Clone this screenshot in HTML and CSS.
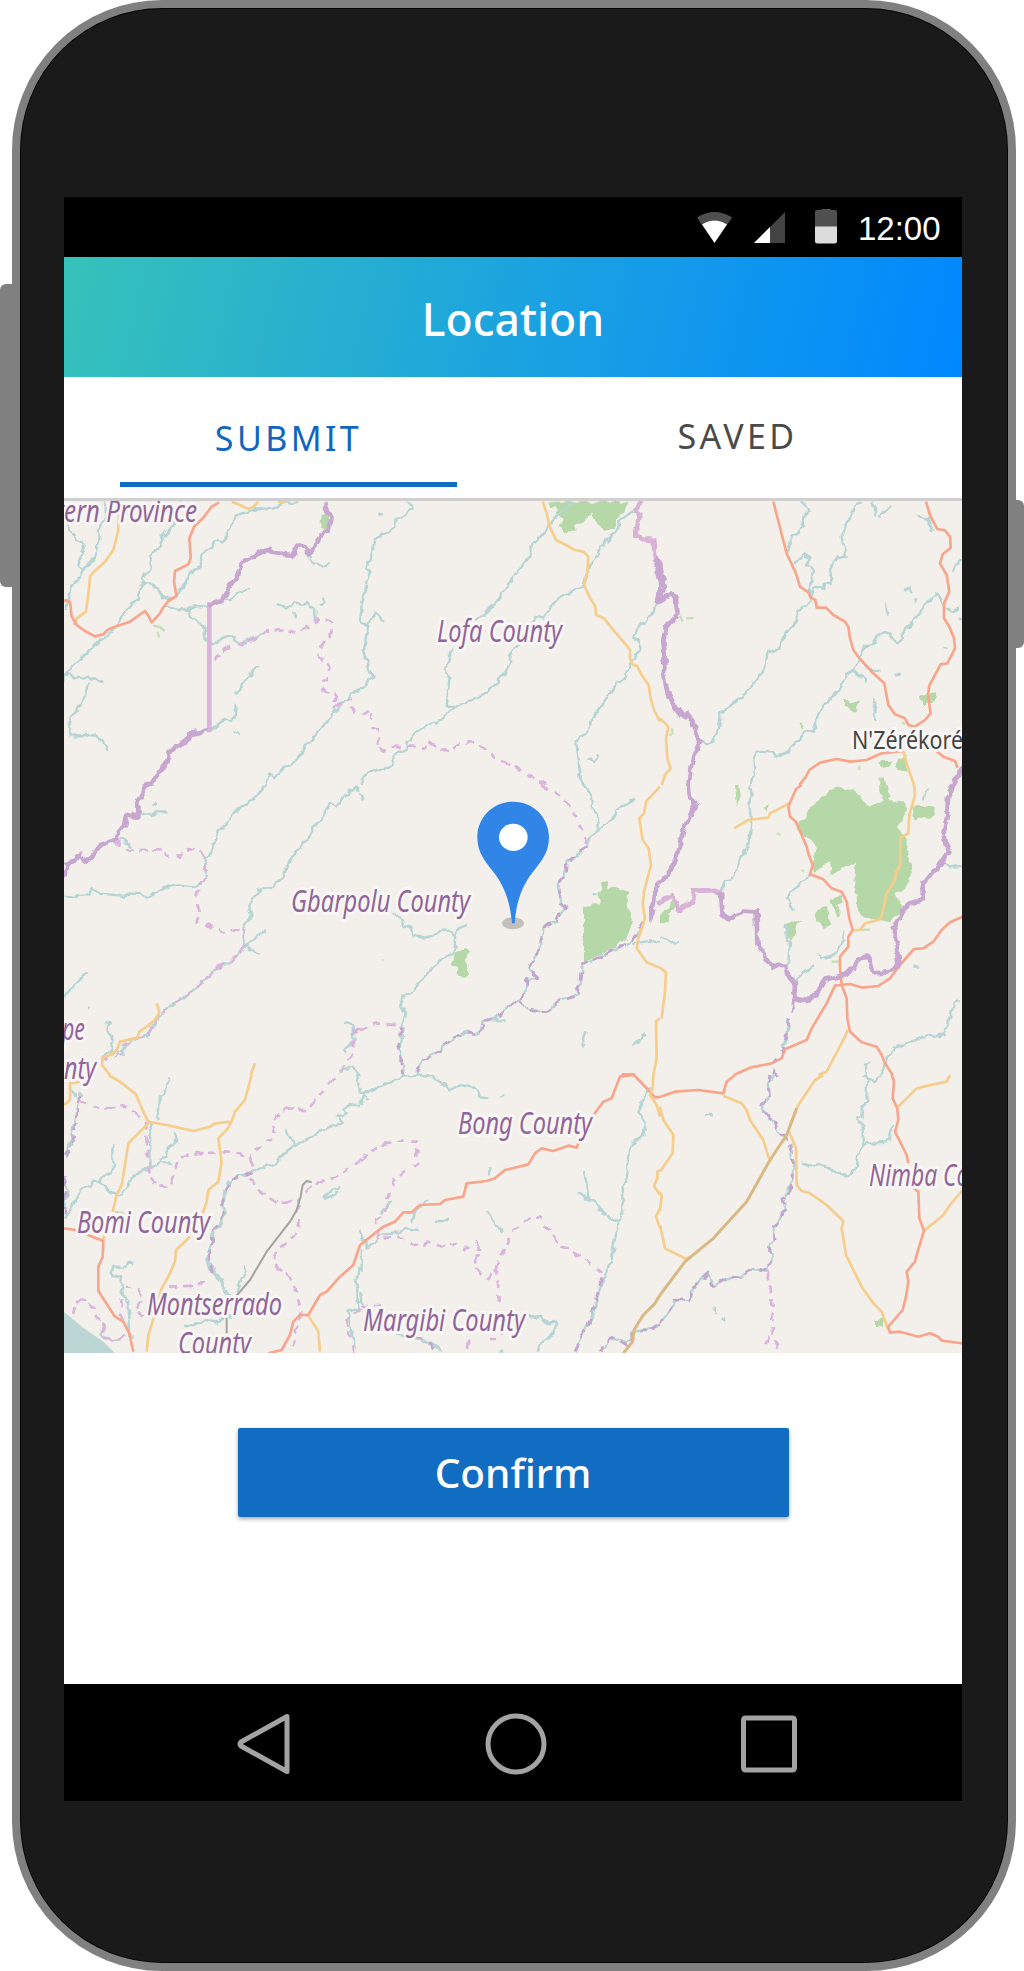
FILE: index.html
```html
<!DOCTYPE html>
<html lang="en">
<head>
<meta charset="utf-8">
<title>Location</title>
<link rel="stylesheet" href="styles.css">
</head>
<body>
<div class="device">
  <span class="side-key side-key-left"></span>
  <span class="side-key side-key-right"></span>
  <div class="shell">
    <div class="screen">
      <div class="status-bar">
        <svg class="wifi" width="36" height="32" viewBox="0 0 36 32"><path fill="#4f4f4f" d="M0 5.5Q18-5.5 35 5.5L30 13Q17.5 4 5 13Z"/><path fill="#fff" d="M5 12.500Q17.500 4.500 30 12.500L17.500 31Z"/></svg>
        <svg class="signal" width="31" height="31" viewBox="0 0 31 31"><path fill="#444" d="M31 0V31H0Z"/><path fill="#fff" d="M16 15V31H0Z"/></svg>
        <svg class="battery" width="22" height="35" viewBox="0 0 22 35"><path fill="#4f4f4f" d="M6 0H16V1H20Q22 1 22 3V18H0V3Q0 1 2 1H6Z"/><path fill="#dcdcdc" d="M0 17.500H22V32Q22 34.500 19.500 34.500H2.500Q0 34.500 0 32Z"/></svg>
        <span class="clock">12:00</span>
      </div>
      <header class="title-bar"><h1>Location</h1></header>
      <nav class="tabs">
        <a class="tab tab-active">SUBMIT</a>
        <a class="tab tab-saved">SAVED</a>
      </nav>
      <svg class="map" viewBox="64 501 898 852">
        <defs>
          <filter id="meander" x="-5%" y="-5%" width="110%" height="110%" color-interpolation-filters="sRGB">
            <feTurbulence type="fractalNoise" baseFrequency=".035" numOctaves="2" seed="4"/>
            <feDisplacementMap in="SourceGraphic" scale="22" xChannelSelector="R" yChannelSelector="G"/>
          </filter>
        </defs>
        <rect class="land" x="64" y="501" width="898" height="852"/>

        <!-- north west -->
        <g transform="translate(60 495) scale(.33333)">
          <path class="wood" d="M785 60L805 55L803 105L780 98Z"/>
          <path class="wood-line" d="M280 392L300 396L314 408M292 410L298 428"/>
          <path class="river" d="M12 80L35 105L48 135L68 142L72 165L55 185L58 205L72 220L62 250L35 268L32 295L18 345M136 20L132 80L116 110L114 155L100 190L72 220M365 20L340 90L308 125L300 150L272 180V225L252 245L248 268L238 290L236 313L215 325L190 360L170 385L155 415L120 435L95 460L70 485L25 525L12 560M25 525L40 552L55 545L65 552L85 545L100 555L130 561M86 560L75 600L48 655L35 670L25 695L32 722L80 720L105 722L125 740L142 768M248 268L280 268L292 285L305 310L345 308M345 308L375 270L390 232L422 218L424 180L450 160L462 140L485 143L512 95L538 58L580 45L640 38L670 25L710 20M318 328L350 342L385 345L410 335L450 331M385 345L400 372L430 395L433 430L455 445L478 438L492 425L522 420L528 445L550 445L580 425L612 415M490 315L512 315L540 293L566 280M598 515L578 520L572 545L545 570L528 595M527 628L525 660L515 675H492L450 705M520 705L530 708L538 715M755 180L756 205L775 207L785 212L803 207M650 330L672 338L698 335L705 322L725 326L738 320L745 335L765 338L767 370L770 385M790 305L790 325L778 332M900 585L880 592L850 620L800 680L740 750L688 815L665 825L648 853L628 838L612 870M700 355L702 373"/>
          <path class="orange" d="M180 20L174 110L160 165L135 200L100 232L90 245L86 290L78 350L50 370L42 390M515 20L540 30L565 42L580 35L595 20M655 20L675 22"/>
          <path class="red" d="M12 315L30 320L35 365L50 390L75 408L105 424L130 418L142 405L160 397L210 380L255 348L265 362L275 382L300 355L308 340L325 318L350 303L342 262L345 228L385 208L392 188L388 130L402 95L430 68L455 35L478 22"/>
          <path class="border straight" d="M448 322V712"/>
          <path class="border" d="M795 20L803 50L812 75L805 105L790 112L770 145L747 176L730 158L712 152L698 180L650 175L622 165L598 172L570 185L548 203L530 245L505 280L485 318L448 330M448 705L388 718L375 742L345 755L330 770L318 802L302 832L285 845L275 870"/>
          <path class="county" d="M460 497L500 460L545 445L600 420L640 402L682 406L712 413L740 400L768 385L775 370L800 375L815 385L808 425L785 460L778 485L798 498L808 515L804 545L785 560V582L806 593L828 600L820 635L845 625L865 612L885 612M870 635L880 645L887 660"/>
        </g>

        <!-- north -->
        <g transform="translate(360 495) scale(.33333)">
          <path class="wood" d="M565 20H805L795 50L775 62L762 98L732 104L710 85L693 55L675 80L645 90L650 110L608 108L600 92L606 70L585 55L595 42L570 38Z"/>
          <path class="river" d="M145 20L160 38L135 58L103 72V98L85 112L42 130L40 165L22 215L30 225L18 262L16 295L6 325L0 380M0 382L25 390L45 355L58 365L75 383M25 390L18 425L12 470L22 510L40 547L0 585M900 322L888 328L880 350L858 380L842 388L820 422L842 460L818 500L808 520L790 550L768 565L755 590L740 605L728 630L695 675L685 705L645 742L655 800L666 870M640 20L605 50L580 72L555 110L518 150L508 183L470 235L435 285L408 330L380 348L345 378M820 48L782 75L760 120L735 145L710 180L690 202L670 272L630 290L592 310L575 335L550 368L530 362L520 378L465 460L455 475L440 520L410 565L385 590L350 607L315 622L278 642L232 683L182 697L158 718L155 735L140 740V765L115 768L95 798V810L70 823L28 830L5 850V870M278 460L258 515L268 550L260 630L278 635V645M55 55L65 58M685 790L700 800L712 778"/>
          <path class="orange" d="M548 20L560 55L568 92L588 135L618 150L645 165L670 170L685 185L682 230L672 270L688 305L706 335L708 360L732 370L760 405L790 440L810 465V490L818 508L832 514L845 540L866 570L872 610L882 645L900 680"/>
          <path class="border-light" d="M850 15L828 45L838 55L834 90L824 122L848 132L882 135L886 200"/>
          <path class="border" d="M886 190L898 215L890 235L900 260L902 295L885 330"/>
          <path class="county" d="M5 660L28 645L38 650V698L60 708L50 755L70 764L110 755L140 758H195L202 738L225 753L240 768L275 762L305 742L345 742L370 755L400 785L430 800L470 815L510 845L560 870"/>
        </g>

        <!-- north east -->
        <g transform="translate(660 495) scale(.33333)">
          <path class="wood" d="M552 615L572 625L595 612L588 635L590 650L575 655L568 640L552 636ZM778 608L800 598L830 595L822 620L800 623L790 637ZM655 802L690 800L688 820L670 825ZM710 790L735 782L742 830L712 825ZM658 850L670 842L680 870H658ZM415 682L430 688L425 705Z"/>
          <path class="wood-line" d="M60 362L68 380M78 370L100 369M35 700L38 715L28 722M598 812V825M725 682L735 688"/>
          <path class="river" d="M425 20L448 45L430 65L428 88L415 98L412 118L398 125L385 155L380 180M398 208L415 200L433 178L448 188L445 210L462 225L458 255L450 272L452 318L440 330L415 345L405 385L380 410L365 440L350 468L322 475L318 510L295 550L262 590L215 632L180 655L170 715L155 745L140 752L122 740M605 20L588 28L575 60L560 85L545 125L548 145L560 162L555 185L530 190L510 220L515 268L498 265L490 282L465 278L452 300M630 20L645 35V62M658 65L672 48L695 30M770 62L800 75L822 105M900 195L885 215L875 230M900 340L875 350L862 345L845 310L825 295L808 315L795 325L785 345L755 385L738 402L730 430L712 445L698 440L690 412L672 408L650 425L635 450L612 455L600 490L568 535L530 590L490 635L472 660L458 708L430 715L410 740L380 770L355 785L340 772L290 770L280 790L282 820L272 870M572 525L620 555M620 515L662 530M648 610L640 645L650 682M675 325L678 350L685 362M735 285L752 278L752 292M765 320L770 310M705 540H720M850 460H860M890 375H903"/>
          <path class="orange" d="M0 670L25 695L18 730L22 790L32 820L15 840L5 870M730 768L738 800L762 870"/>
          <path class="red" d="M340 20L358 90L380 175L408 235L420 275L445 292L452 308L466 315L470 338H498L520 360L555 380L565 395L570 430L580 465L600 492L640 535L673 565L685 630L705 658L735 670L745 690L765 695L795 675L812 655L804 600L808 572L842 508L862 505L885 460L882 430L868 395L852 370V325L868 290L860 240L840 205L848 178L872 158L870 125L855 106L832 102L810 60L798 20M730 768L665 775L620 795L570 800L530 792L480 803L448 825L438 845L418 870M825 765L850 785L885 798L893 818"/>
          <path class="border" d="M0 195L5 245L12 275L0 320L38 295L48 310L52 355L38 380L18 395L10 435L14 480L12 535L22 590L48 640L68 665L82 655L98 678L106 715L118 745L104 780L92 812L85 875M910 820L875 875"/>
        </g>

        <!-- west -->
        <g transform="translate(60 785) scale(.33333)">
          <path class="river" d="M235 82L255 90L290 82H328M282 55L290 62M175 165L205 172L213 188M615 0L585 40L565 50L518 90L508 108L475 138L460 180L450 212L437 220V285L415 300L395 307L360 298L330 302L290 322L262 335L240 328L210 325L190 332L120 326L100 315L75 328L15 335M12 635L45 598L80 560M900 20L885 8L870 18L825 68L808 55L782 105L758 128L740 165L715 190L695 212L680 245L670 275L645 300L602 318L590 308M602 318L578 342L568 372L575 390L552 435V480L600 507M555 485L580 468L595 448L618 442M555 485L510 530L470 550L430 590L370 640L320 670L285 715L258 752L215 768L180 810M148 705L140 725L145 745L160 772L150 795L135 825M900 870L880 845L835 858M852 712L880 722L884 765L868 790L850 800M80 666H87"/>
          <path class="county" d="M165 165L180 182L208 197L310 192L318 212L362 215L385 190L405 192L437 215V280L420 310L408 340L415 370L413 415L455 425L490 445L550 430L555 470"/>
          <path class="county" d="M555 482L510 528L470 548L430 590L370 640L320 668L290 705L262 752L220 765L180 790L165 815L130 820M900 730L882 745V790L838 865"/>
          <path class="orange" d="M290 655L298 682L285 705L260 725L238 740L232 758L180 770L170 795L155 810L128 815L126 840L150 870M585 835L572 870"/>
          <path class="border" d="M280 -5L250 5L248 25L232 50V95L203 88L195 122L180 142L162 162L110 190L98 208L78 228L64 206L40 228L22 240L8 275"/>
        </g>

        <!-- centre -->
        <g transform="translate(360 785) scale(.33333)">
          <path class="wood" d="M672 368L720 355L716 325L728 287H742L746 312L765 305L805 322L800 360L815 415L800 458L760 492L672 532ZM285 505L315 488L335 500L318 520V558L328 572L315 584L290 568L294 545L274 542Z"/>
          <path class="river" d="M0 25L10 50M98 382L120 395L130 418L155 430L160 448L195 458L225 448L250 430L275 445L285 455L284 500L245 525L215 550L185 585L160 615L122 640L125 665L140 690L128 725L122 790L128 870M285 455L295 430L322 420M665 0L692 22L695 65L712 90L718 135L690 155L678 182L650 212L622 228L620 262L592 295L605 355L618 368L580 410L550 435L538 490L510 535L512 560L530 575L502 588L495 625L475 645L440 670L408 700L368 708L365 735L345 750L318 740L275 760L245 785V795L185 825L172 870M718 135L752 105L780 65L800 60L828 38M475 645L505 672L560 680L590 650L655 630L665 540L740 508L820 465L835 430M820 478L900 465M380 706H430L442 715M680 742L672 765L675 790M855 745L835 760L822 783M700 330H715M68 520H72"/>
          <path class="county" d="M0 735L50 715L120 722M545 0L575 15L620 50L650 95L670 145L678 175"/>
          <path class="county wet" d="M678 182L650 210L622 228L620 262L594 295L605 355L616 370L580 410L550 435L538 490L510 535L512 560L530 575L502 588L495 625L475 645L440 670L408 700L368 708L365 735L345 750L318 740L275 760L245 785L242 800L185 825L172 860M475 645L505 672L560 680L590 650L655 630L665 540L740 508L820 465L850 410M124 730L118 795L128 870"/>
          <path class="orange" d="M900 5L858 50L852 85L838 100L848 165L866 190L873 240L852 320L848 360L855 400L835 460L830 490L848 515L860 532L900 548M900 700L888 708L890 820L880 870"/>
          <path class="border" d="M900 288L882 330L870 412"/>
          <path class="red" d="M785 868H825"/>
        </g>

        <!-- east -->
        <g transform="translate(660 785) scale(.33333)">
          <path class="wood" d="M505 10L535 5L575 12L605 38L625 65L672 45L658 20V0H682L690 30L680 40L700 55L733 48L735 95L715 120L730 160L748 182L742 220L755 240L748 290L710 325L715 345L735 365L720 385L690 408L640 400L612 402L592 378L590 330L582 320L585 240L550 245L515 270L510 230L490 240L465 265L460 255V215L470 190L462 172L425 155L412 105L435 100L448 68L475 50ZM755 68L770 60L820 72L822 95L780 95L760 105ZM465 388L490 362L505 360L508 415L495 430L470 410ZM370 425L395 410L425 408L410 430L412 445L390 465ZM510 345L545 330L550 350L535 355L540 390L528 400L525 365ZM225 0H235L240 40L232 70ZM308 70L330 60L320 80ZM0 390L25 370L40 330L50 365L30 385L25 410L0 412Z"/>
          <path class="wood-line" d="M350 145L362 150M425 255L432 260M600 435L630 434M515 530L540 530"/>
          <path class="river" d="M272 0L278 30L268 60L272 95L265 180L245 215L235 245L212 285L195 290L180 320M452 270L395 320L385 340L395 360L398 382M375 420L382 465L390 470L384 545M550 440L552 470L540 480L530 498L515 512L480 522V508M463 540L450 550L430 560L415 580L408 595M800 10L790 40M848 235L870 250L903 245M0 460L35 472L55 467M903 648L882 652L870 700L850 748L800 755L760 770L700 785L680 825L660 870M630 835H615V870M385 700L378 760L370 785M760 545H778"/>
          <path class="orange" d="M222 130L265 105L325 98L330 85L388 55M762 0L765 30L748 90L745 145L722 158L720 245L708 260L705 285L680 325L665 395L655 405L615 415L600 435H580M0 548L18 562L15 620L5 700M563 735L555 755L500 860L475 870"/>
          <path class="red" d="M425 0L408 12L385 65L390 95L408 110L425 150L440 185L445 205L458 240L450 268L490 283L515 310L545 320L560 350L568 400L578 435L565 455V485L540 515V545L545 600M908 395L870 412L845 435L820 470L790 490L762 492L720 540L690 580L655 603L608 608L570 597L525 602L500 655L455 730L440 765L375 793L365 820L335 835L270 848L222 870M545 600L560 640L562 700L570 740L605 772L650 785L665 810L675 835L698 870"/>
          <path class="border-light" d="M-8 358L38 328L55 380L95 350L102 318L155 315L185 325"/>
          <path class="border" d="M85 -5L90 35L108 52L75 125L45 225L25 265L-4 299M183 322L188 390L205 400L245 380L290 382L292 480L338 543L378 542L388 580L405 600L402 640L445 648L480 610L495 585L550 570L570 560L590 530L612 518L628 515L640 565L680 562L715 540L710 480L700 435L720 400L742 358L788 345V290L815 275L868 200L855 175L850 145L862 90L864 35L882 -4M402 640L398 660"/>
          <path class="county wet" d="M400 660L380 740L370 795L335 840L345 870"/>
        </g>

        <!-- south west -->
        <g transform="translate(60 1075) scale(.33333)">
          <path class="sea" d="M12 710L70 758L130 800L165 835H12Z"/>
          <path class="wood-line" d="M165 410L192 415"/>
          <path class="river" d="M60 50L42 140L30 210L15 250M30 40L50 60M328 10L315 55L300 65L295 135M270 150L272 280L235 290L205 325L185 362L155 355L125 325L105 320L85 330L60 350L45 380L15 430M160 210V270L148 295L125 305L115 325M345 170L345 205L325 220L305 260L275 280M308 262H325L340 272M675 165L690 190L705 205M900 90L880 90L850 100L860 115L830 125L850 145L800 155L730 200L700 208L665 245L640 270L585 285L520 315L498 340L492 420L465 470L440 540L450 580L480 620L512 660M555 570L558 600L540 620L530 655M220 565L205 560L200 575L160 575L155 595L180 610L190 660L205 690L212 790M125 760V780L185 798M375 750H400L440 735L475 740M520 720L470 740M788 370L810 350L840 335M790 373L840 350M900 575L890 625L895 700L865 710L878 770L885 820M890 0L900 50M15 310L22 350L15 400"/>
          <path class="river-wide" d="M510 320L490 350L492 410L480 450L460 475L440 550L480 610L505 655"/>
          <path class="county" d="M60 75L85 90L120 98L200 95L255 130M258 140L260 210L268 260V300L290 335L325 335L345 290L360 245L400 235L520 232L570 250L578 280M820 10L740 105L680 104L660 112L642 145L648 180L600 215L570 245M570 310L600 350L650 380L712 380L755 330L800 312L840 300L900 255M715 390V450L690 500L652 520L645 570L680 600L710 640L722 720L700 790V830M330 635L400 632L440 620M195 635L240 640L242 680L225 705L262 730M40 720L45 685L75 672L95 690L105 725L130 740V785L180 795L208 770L185 720L180 660M900 700L862 735L880 830"/>
          <path class="county wet" d="M58 60L45 150L35 210L15 250M578 290L520 315L495 345L488 420L460 470L445 540L460 600M15 310V420"/>
          <path class="orange" d="M145 0L180 20L228 58L245 100L265 140L320 150L400 168L450 155L465 145L515 140L525 110L555 75L575 0M515 140L500 165L475 190L485 260L475 320L445 345L440 380L425 425M265 145L205 205L195 270L185 330L170 360L158 410M130 495L135 470M390 485L348 525L345 560L325 605L305 640L278 740L265 780L260 830M745 722L775 770L780 830M12 90L30 75V25L60 20"/>
          <path class="red" d="M12 460L45 465L130 498L128 545L115 575V648L165 725L190 740L208 775L220 830M900 510L880 570L840 605L800 650L780 660L745 720H720L700 740L690 780L665 825L625 835"/>
          <path class="rail" d="M755 322L740 318L728 330L722 365L710 405L690 440L620 530L570 615L510 685L500 720V775"/>
        </g>

        <!-- south -->
        <g transform="translate(360 1075) scale(.33333)">
          <path class="river" d="M0 90L15 55L45 40L130 5L195 0L230 12L240 25L262 30L268 45L300 30L340 38L365 70L385 72M0 50L20 75M0 470L20 515L45 505L50 480L110 475L145 460L175 465M155 445L165 415L205 375M60 420L95 375M5 520V590M228 435H270M380 410L390 425L408 452L418 455L428 473M385 280V300M420 65L430 62M872 38L850 70L835 115L858 145L850 180L812 210L800 310L785 340L790 405L778 440L765 490L755 550L735 600L720 650L700 720L665 790L645 830M778 440L745 425L705 385L680 370L655 350M672 288L680 330L685 370M505 725L540 720L550 735L570 745L590 742L575 780L540 810L533 830M110 775L160 785L220 810L245 830M0 650L5 690M415 830L430 827M900 750L830 765L800 800L750 790L735 820"/>
          <path class="county" d="M0 255L60 210L95 200H172V268L130 288L100 325L82 370L75 410L55 430L52 490L120 485L145 500L185 512L205 503L240 512L285 505L315 520L350 505L358 540L345 555L348 582L382 612L400 590L430 525L440 495L475 455L520 425L545 425L548 440L580 480L600 515L632 520L660 545L725 592M405 575L415 630V700M325 795L318 830M390 792L410 792L430 775M0 690H60"/>
          <path class="county wet" d="M725 610L705 690L685 750L645 830M900 750L860 765L830 765L800 810L755 790L720 830M170 780L230 825"/>
          <path class="red" d="M0 510L70 455L105 440L130 412H155L180 390L240 387L255 375L310 365L320 325L380 318L405 310L435 285L505 268L525 235L545 220L580 228L625 212L650 218L657 200M670 190L680 160M702 118L730 80L755 70L780 5L822 0L865 45L885 67L900 66"/>
          <path class="orange" d="M880 0L878 40L870 60L890 90L900 125M900 285L892 290V310L882 332L900 360M900 400L888 425L900 460"/>
          <path class="trunk" d="M900 660L885 685L850 720L822 765L818 800L790 835"/>
        </g>

        <!-- south east -->
        <g transform="translate(660 1075) scale(.33333)">
          <path class="wood" d="M645 735L670 732L672 762L645 755Z"/>
          <path class="river" d="M340 0L325 25L332 65L305 90L320 120L345 140L355 170L380 190M660 5L640 18L622 10L612 0M622 10L618 85L605 100V125L592 135L608 150V215L595 240L590 275L568 300L550 302L515 285L480 270L450 275L420 265M608 212L640 203L680 200L692 165L700 150M390 205L400 280L395 330L368 370L378 405L340 455L345 495L330 515L338 540L320 590L280 582L240 605L200 615L160 632L145 592L100 635L90 675H50L0 745M157 695L170 720M135 120H155M190 725L193 738"/>
          <path class="county wet" d="M330 0L325 25L332 65L305 90L320 120L345 140L355 170L380 190L398 240L395 340L368 370L378 405L340 455L345 495L330 515L338 540L320 590L280 582L240 605L200 615L155 632L145 595L100 635L90 675H50L0 745"/>
          <path class="county" d="M322 590L335 640L338 710L335 770L360 830M325 785L315 815"/>
          <path class="orange" d="M0 95L10 135L40 180L38 235L0 290M0 352L5 360L0 410M0 450L15 520L75 550L95 547M190 62L245 85L260 105L270 135L310 195L325 245L335 258M490 0L465 15L415 90L385 165L408 220L410 330L425 348L450 355L500 390L550 438L545 460L558 540L605 635L640 685L665 710L685 765M908 345L870 390L850 420L820 445L792 467M870 0L860 20L820 28L770 40L715 95"/>
          <path class="trunk" d="M410 100L380 180L330 255L260 380L160 490L75 560L0 660"/>
          <path class="red" d="M0 66L45 50L115 45L190 55L200 20L225 0M695 0L702 18L698 70L712 100L715 135L705 170L740 240L745 265M755 335L775 350L778 430L792 467L770 540L765 560L740 590L745 620L738 665L728 705L685 755L690 773L720 770L775 785L810 775L835 785L845 797L908 805"/>
        </g>

        <g class="labels">
          <text x="56" y="522" textLength="141" lengthAdjust="spacingAndGlyphs">tern Province</text>
          <text x="437" y="642" textLength="125" lengthAdjust="spacingAndGlyphs">Lofa County</text>
          <text x="291" y="912" textLength="179" lengthAdjust="spacingAndGlyphs">Gbarpolu County</text>
          <text x="62" y="1040" textLength="23" lengthAdjust="spacingAndGlyphs">pe</text>
          <text x="64" y="1079" textLength="32" lengthAdjust="spacingAndGlyphs">nty</text>
          <text x="458" y="1134" textLength="134" lengthAdjust="spacingAndGlyphs">Bong County</text>
          <text x="869" y="1186" textLength="145" lengthAdjust="spacingAndGlyphs">Nimba County</text>
          <text x="77" y="1232.500" textLength="133" lengthAdjust="spacingAndGlyphs">Bomi County</text>
          <text x="147" y="1315" textLength="135" lengthAdjust="spacingAndGlyphs">Montserrado</text>
          <text x="178" y="1354" textLength="73" lengthAdjust="spacingAndGlyphs">County</text>
          <text x="363" y="1331" textLength="162" lengthAdjust="spacingAndGlyphs">Margibi County</text>
          <text class="city" x="852" y="748.500" textLength="111" lengthAdjust="spacingAndGlyphs">N'Zérékoré</text>
        </g>

        <g class="pin" transform="translate(360 785) scale(.33333)">
          <ellipse cx="459" cy="415" rx="33" ry="18" fill="#c3bfba"/>
          <path d="M460 50C400 50 352 97 352 157C352 203 376 230 398 258C432 300 450 347 456 415H464C469 347 487 300 521 258C543 230 567 203 567 157C567 97 519 50 460 50Z"/>
          <ellipse cx="460" cy="157" rx="43" ry="41" fill="#fff"/>
        </g>
      </svg>
      <main class="actions"><button class="confirm">Confirm</button></main>
      <div class="nav-bar">
        <svg width="54" height="62" viewBox="0 0 54 62"><path d="M50 3.500V58.500L4 33Q2 31 4 29Z"/></svg>
        <svg width="62" height="62" viewBox="0 0 62 62"><circle cx="31" cy="31" r="28"/></svg>
        <svg width="56" height="58" viewBox="0 0 56 58"><rect x="2.500" y="3" width="51" height="52" rx="2"/></svg>
      </div>
    </div>
  </div>
</div>
</body>
</html>
```
FILE: styles.css
```css
* { box-sizing: border-box; }

body {
  margin: 0;
  background: #fff;
  font-family: "Noto Sans", "Open Sans", sans-serif;
}

.device {
  position: relative;
  width: 1024px;
  height: 1971px;
  padding: 0 8px 0 12px;
  overflow: hidden;
}

.shell {
  position: relative;
  height: 1971px;
  padding: 188px 46px 0 43px;
  border: 8px solid #808080;
  border-radius: 150px;
  background: #1a1a1a;
  box-shadow: inset 0 0 0 1px #050505;
}

.side-key {
  position: absolute;
  width: 20px;
  background: #808080;
  border-radius: 6px;
}
.side-key-left { left: 0; top: 284px; height: 303px; }
.side-key-right { right: 0; top: 500px; height: 148px; }

.screen {
  display: flex;
  flex-direction: column;
  margin-top: 1px;
  height: 1604px;
  margin-left: 1px;
  background: #fff;
}

.status-bar {
  display: flex;
  align-items: flex-start;
  flex: 0 0 60px;
  padding-top: 15px;
  padding-left: 633px;
  background: #000;
}
.signal { margin-left: 21px; }
.battery { margin: -3px 0 0 30px; }
.clock {
  margin: -2px 0 0 21px;
  color: #fff;
  font: 33px/37px "Liberation Sans", Arial, sans-serif;
}

.title-bar {
  display: flex;
  align-items: center;
  justify-content: center;
  flex: 0 0 120px;
  padding-top: 3px;
  background: linear-gradient(103deg, #36c1ba 1%, #1ba2e1 52%, #0088ff 100%);
}
.title-bar h1 {
  margin: 0;
  color: #fff;
  font-size: 44.5px;
  font-weight: 500;
  line-height: 60px;
}

.tabs {
  display: flex;
  justify-content: space-between;
  flex: 0 0 124px;
  padding: 0 56px;
  border-bottom: 3px solid #cfcfcf;
}
.tab {
  width: 337px;
  height: 110px;
  color: #4a4a4a;
  font-size: 34px;
  font-weight: 400;
  letter-spacing: 3.4px;
  line-height: 123px;
  text-align: center;
}
.tab-active { color: #0f66bf; border-bottom: 5px solid #106dc0; }
.tab-saved { line-height: 119px; }

.map {
  display: block;
  flex: 0 0 852px;
  width: 100%;
}
.map path {
  fill: none;
  stroke-linejoin: round;
}
.map .land { fill: #f3f0eb; }
.map .sea { fill: #bcd6d6; }
.map .wood { fill: #b6d7a8; filter: url(#meander); }
.map .wood-line { stroke: #c6e0b8; stroke-width: 7; }
.map .river { stroke: #b5d4d3; stroke-width: 7; filter: url(#meander); }
.map .river-wide { stroke: #bad6d5; stroke-width: 10; filter: url(#meander); }
.map .orange { stroke: #f7cd8b; stroke-width: 8; }
.map .trunk { stroke: #d8b985; stroke-width: 9; }
.map .red { stroke: #f8a58c; stroke-width: 8; }
.map .rail { stroke: #a3a3a0; stroke-width: 6; }
.map .border { stroke: #c7a6cf; stroke-width: 14; filter: url(#meander); }
.map .border.straight { stroke: #dab5da; filter: none; }
.map .border-light { stroke: #dab2d8; stroke-width: 15; filter: url(#meander); }
.map .county { stroke: #dab4dc; stroke-width: 8; stroke-dasharray: 24 18; filter: url(#meander); }
.map .county.wet { stroke: #c2a6cf; }
.map .pin path { fill: #3185e7; }

.labels text {
  fill: #916598;
  stroke: #f9f7f6;
  stroke-width: 6px;
  stroke-linejoin: round;
  paint-order: stroke;
  font-size: 30px;
  font-style: italic;
}
.labels .city {
  fill: #444;
  font-size: 26px;
  font-style: normal;
}

.actions {
  display: flex;
  justify-content: center;
  flex: 1;
  padding-top: 75px;
}
.confirm {
  width: 551px;
  height: 89px;
  padding: 0;
  border: 0;
  border-radius: 2px;
  background: #106dc1;
  box-shadow: 0 2px 4px rgba(0, 0, 0, .35);
  color: #fff;
  font: 500 40.5px/89px "Noto Sans", "Open Sans", sans-serif;
}

.nav-bar {
  display: flex;
  align-items: center;
  flex: 0 0 117px;
  gap: 194px;
  padding-left: 172.5px;
  padding-top: 3px;
  background: #000;
}
.nav-bar svg {
  fill: none;
  stroke: #a3a3a3;
  stroke-width: 5;
  stroke-linejoin: round;
}
```
